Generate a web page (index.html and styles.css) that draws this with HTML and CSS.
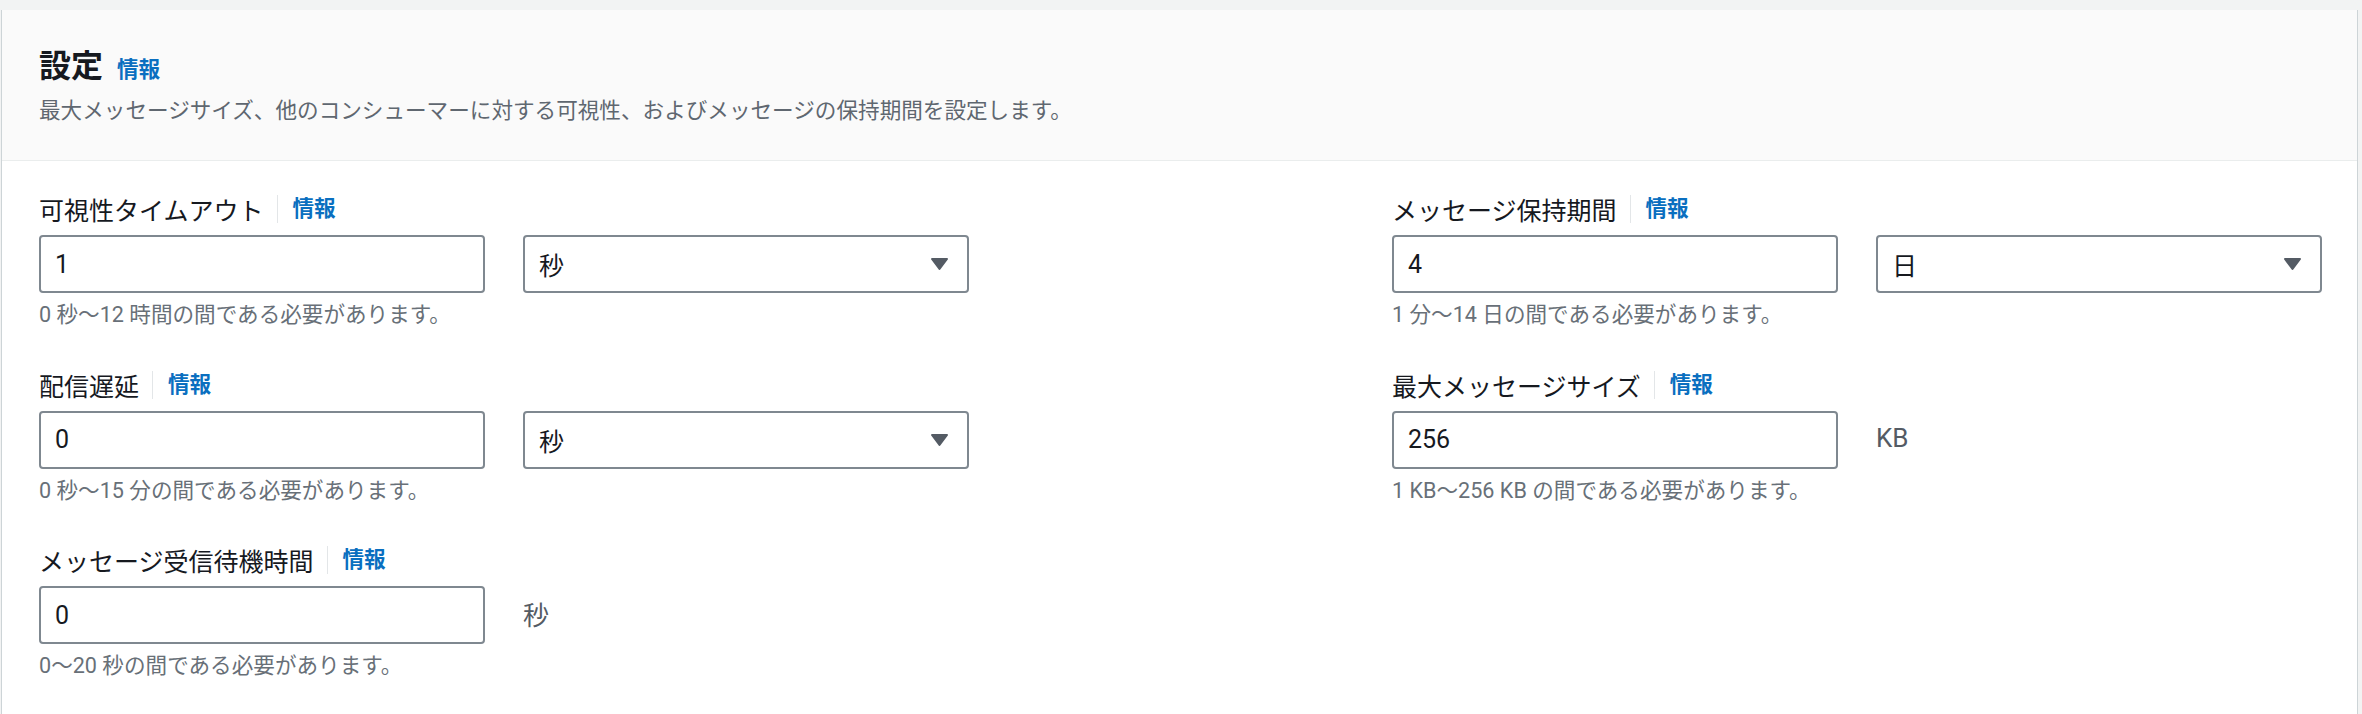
FILE: index.html
```html
<!DOCTYPE html>
<html lang="ja">
<head>
<meta charset="utf-8">
<title>設定</title>
<link rel="stylesheet" href="styles.css">
</head>
<body>
<div class="page">
  <section class="card">
    <header class="card-header">
      <h2 class="title">設定<a class="info title-info" href="#">情報</a></h2>
      <p class="desc">最大メッセージサイズ、他のコンシューマーに対する可視性、およびメッセージの保持期間を設定します。</p>
    </header>
    <div class="card-body">
      <div class="col">
        <div class="field">
          <div class="label-row"><span class="label">可視性タイムアウト</span><a class="info" href="#">情報</a></div>
          <div class="controls">
            <div class="input">1</div>
            <div class="select"><span>秒</span><svg class="caret" width="19" height="14" viewBox="0 0 19 14"><path d="M2 2 H17 L9.5 12 Z"/></svg></div>
          </div>
          <div class="hint">0 秒〜12 時間の間である必要があります。</div>
        </div>
        <div class="field">
          <div class="label-row"><span class="label">配信遅延</span><a class="info" href="#">情報</a></div>
          <div class="controls">
            <div class="input">0</div>
            <div class="select"><span>秒</span><svg class="caret" width="19" height="14" viewBox="0 0 19 14"><path d="M2 2 H17 L9.5 12 Z"/></svg></div>
          </div>
          <div class="hint">0 秒〜15 分の間である必要があります。</div>
        </div>
        <div class="field">
          <div class="label-row"><span class="label">メッセージ受信待機時間</span><a class="info" href="#">情報</a></div>
          <div class="controls">
            <div class="input">0</div>
            <div class="unit">秒</div>
          </div>
          <div class="hint">0〜20 秒の間である必要があります。</div>
        </div>
      </div>
      <div class="col">
        <div class="field">
          <div class="label-row"><span class="label">メッセージ保持期間</span><a class="info" href="#">情報</a></div>
          <div class="controls">
            <div class="input">4</div>
            <div class="select"><span>日</span><svg class="caret" width="19" height="14" viewBox="0 0 19 14"><path d="M2 2 H17 L9.5 12 Z"/></svg></div>
          </div>
          <div class="hint">1 分〜14 日の間である必要があります。</div>
        </div>
        <div class="field">
          <div class="label-row"><span class="label">最大メッセージサイズ</span><a class="info" href="#">情報</a></div>
          <div class="controls">
            <div class="input">256</div>
            <div class="unit">KB</div>
          </div>
          <div class="hint">1 KB〜256 KB の間である必要があります。</div>
        </div>
      </div>
    </div>
  </section>
</div>
</body>
</html>
```

FILE: styles.css
```css
html, body {
  margin: 0;
  padding: 0;
}

body {
  background: #f2f3f3;
  font-family: Roboto, "Noto Sans CJK JP", sans-serif;
  color: #16191f;
}

.page {
  padding: 10px 4px 0 1px;
}

.card {
  background: #ffffff;
  border-left: 1px solid #cdd4d7;
  border-right: 1px solid #cdd4d7;
  min-height: 704px;
  box-sizing: border-box;
}

.card-header {
  background: #fafafa;
  border-bottom: 1px solid #eaeded;
  padding: 36px 35px 35px 37px;
}

.title {
  margin: 0;
  display: flex;
  align-items: baseline;
  font-size: 32px;
  line-height: 40px;
  font-weight: 700;
  color: #16191f;
}

.info {
  color: #0a6fc0;
  font-weight: 700;
  font-size: 21.6px;
  text-decoration: none;
}

.title-info {
  margin-left: 14px;
}

.desc {
  margin: 6px 0 0;
  font-size: 21.6px;
  line-height: 29px;
  color: #5f6770;
}

.card-body {
  display: grid;
  grid-template-columns: 930px 930px;
  justify-content: space-between;
  padding: 28px 35px 0 37px;
}

.col {
  display: flex;
  flex-direction: column;
  gap: 35.5px;
}

.label-row {
  display: flex;
  align-items: center;
  height: 40px;
  font-size: 25px;
  color: #16191f;
}

.label-row .info {
  border-left: 1px solid #e3e6e8;
  margin-left: 13px;
  padding-left: 15px;
  line-height: 28px;
}

.controls {
  display: grid;
  grid-template-columns: 1fr 1fr;
  column-gap: 38px;
  margin-top: 6px;
}

.input,
.select {
  height: 58px;
  box-sizing: border-box;
  border: 2px solid #7f8890;
  border-radius: 4px;
  background: #ffffff;
  display: flex;
  align-items: center;
  padding: 0 18px 0 14px;
  font-size: 25px;
  color: #16191f;
}

.select {
  justify-content: space-between;
}

.caret path {
  fill: #545b64;
  stroke: #545b64;
  stroke-width: 2;
  stroke-linejoin: round;
}

.unit {
  align-self: center;
  margin-top: -4px;
  font-size: 26px;
  color: #545b64;
}

.hint {
  margin-top: 7px;
  font-size: 21.6px;
  line-height: 29px;
  color: #687078;
}
```
